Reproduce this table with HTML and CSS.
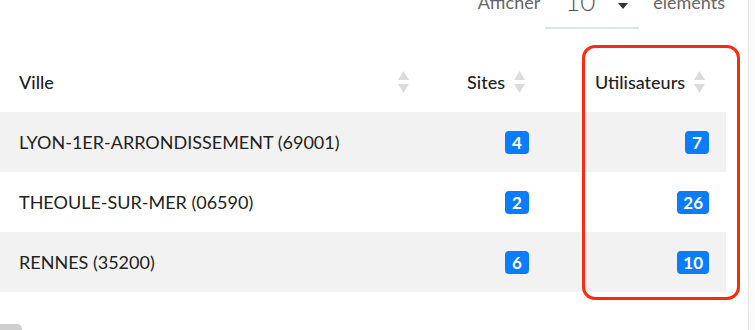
FILE: index.html
```html
<!DOCTYPE html>
<html lang="fr">
<head>
<meta charset="utf-8">
<title>Villes</title>
<link rel="stylesheet" href="styles.css">
</head>
<body>
<div class="page">
  <div class="main">
    <div class="toolbar">
      <span class="label">Afficher</span>
      <div class="select">
        <span class="select-value">10</span>
        <svg class="select-arrow" width="10" height="24" viewBox="0 0 10 24"><path d="M0 8 L5 2 L10 8 Z M0 11 L10 11 L5 17 Z" fill="#333"/></svg>
      </div>
      <span class="label">éléments</span>
    </div>
    <table class="grid">
      <colgroup><col class="c1"><col class="c2"><col class="c3"></colgroup>
      <thead>
        <tr>
          <th class="th-left"><div class="th-inner between"><span>Ville</span><svg class="sort" width="11" height="24" viewBox="0 0 11 24"><path d="M5.5 1 L11 10 L0 10 Z M0 14 L11 14 L5.5 23 Z" fill="#dcdcdc"/></svg></div></th>
          <th><div class="th-inner end"><span>Sites</span><svg class="sort" width="11" height="24" viewBox="0 0 11 24"><path d="M5.5 1 L11 10 L0 10 Z M0 14 L11 14 L5.5 23 Z" fill="#dcdcdc"/></svg></div></th>
          <th><div class="th-inner end"><span>Utilisateurs</span><svg class="sort" width="11" height="24" viewBox="0 0 11 24"><path d="M5.5 1 L11 10 L0 10 Z M0 14 L11 14 L5.5 23 Z" fill="#dcdcdc"/></svg></div></th>
        </tr>
      </thead>
      <tbody>
        <tr class="odd"><td class="td-left">LYON-1ER-ARRONDISSEMENT (69001)</td><td class="num"><span class="badge">4</span></td><td class="num"><span class="badge">7</span></td></tr>
        <tr><td class="td-left">THEOULE-SUR-MER (06590)</td><td class="num"><span class="badge">2</span></td><td class="num"><span class="badge">26</span></td></tr>
        <tr class="odd"><td class="td-left">RENNES (35200)</td><td class="num"><span class="badge">6</span></td><td class="num"><span class="badge">10</span></td></tr>
      </tbody>
    </table>
    <div class="footer-btn"></div>
    <div class="highlight"></div>
  </div>
  <div class="gutter"></div>
</div>
</body>
</html>
```

FILE: styles.css
```css
html, body {
  margin: 0;
  padding: 0;
  background: #fff;
  overflow: hidden;
}
body {
  font-family: Lato, "Open Sans", sans-serif;
  color: #222;
}
.page {
  display: flex;
  height: 330px;
  overflow: hidden;
}
.main {
  position: relative;
  width: 748px;
  flex: none;
}
.gutter {
  flex: 1;
  border-left: 1px solid #e4e4e4;
  background: #fafafa;
}
.toolbar {
  display: flex;
  justify-content: flex-end;
  align-items: flex-start;
  margin-top: -14px;
  padding-right: 23px;
  height: 44px;
}
.label {
  font-size: 18px;
  line-height: 20px;
  color: #666;
  margin-top: 6px;
}
.select {
  width: 94px;
  height: 43px;
  margin: 0 14px 0 5px;
  border-bottom: 2px solid #e0e4e9;
  box-sizing: border-box;
  display: flex;
  align-items: flex-start;
  padding-left: 20px;
}
.select-value {
  font-size: 26px;
  line-height: 30px;
  font-weight: 300;
  color: #555;
}
.select-arrow {
  margin-left: 23px;
  margin-top: 6px;
}
.grid {
  border-collapse: collapse;
  table-layout: fixed;
  width: 726px;
  margin-top: 22px;
}
.c1 { width: 430px; }
.c2 { width: 116px; }
.c3 { width: 180px; }
th, td {
  height: 60px;
  padding: 0 17px;
  font-size: 18px;
  vertical-align: middle;
}
th {
  font-weight: 500;
  color: #222;
  text-align: right;
}
.th-left, .td-left {
  padding-left: 19px;
  text-align: left;
}
.th-inner {
  display: flex;
  align-items: center;
}
.th-inner.between { justify-content: space-between; }
.th-inner.end { justify-content: flex-end; gap: 9px; }
.sort { margin-right: 4px; }
td { color: #222; }
tr.odd td { background: #f2f2f2; }
.num { text-align: right; }
.badge {
  display: inline-block;
  min-width: 12px;
  padding: 0 6px;
  height: 23px;
  line-height: 23px;
  border-radius: 4px;
  background: #0a7cfe;
  color: #fff;
  font-weight: 700;
  font-size: 17px;
  text-align: center;
  vertical-align: middle;
}
.footer-btn {
  width: 22px;
  height: 12px;
  margin-top: 32px;
  background: #cfcfcf;
  border-radius: 0 5px 0 0;
}
.highlight {
  position: absolute;
  left: 582px;
  top: 45px;
  width: 152px;
  height: 249px;
  border: 3px solid #fb2c0c;
  border-radius: 13px;
}
```
